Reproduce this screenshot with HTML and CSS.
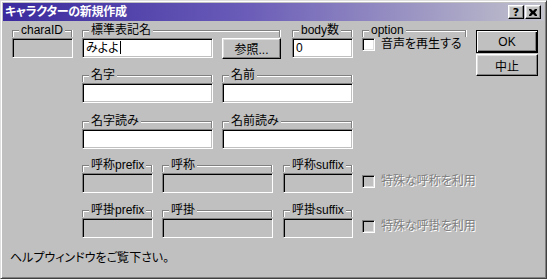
FILE: index.html
```html
<!doctype html>
<html lang="ja">
    <head>
        <meta charset="UTF-8" />
        <title>キャラクターの新規作成</title>
        <link rel="stylesheet" href="styles.css">
    </head>
    <body>
        <div class="window">
            <div class="titlebar">
                <span class="title">キャラクターの新規作成</span>
                <div class="title-buttons">
                    <span class="tbtn">?</span>
                    <span class="tbtn">
                        <svg viewBox="0 0 8 7" width="8" height="7">
                            <path d="M0 0h2l2 2 2-2h2v1l-2 2.5 2 2.5v1h-2l-2-2-2 2h-2v-1l2-2.5-2-2.5z" fill="#000"/>
                        </svg>
                    </span>
                </div>
            </div>

            <div class="client">
                <div class="form">
                    <div class="row row-1">
                        <div class="grp w-id">
                            <div class="cap"><span>charaID</span></div>
                            <div class="edit off"></div>
                        </div>
                        <div class="grp w-name">
                            <div class="cap"><span>標準表記名</span></div>
                            <div class="grp-body">
                                <div class="edit w-wide">みよよ<span class="caret"></span></div>
                                <div class="btn btn-ref">参照...</div>
                            </div>
                        </div>
                        <div class="grp w-body">
                            <div class="cap"><span>body数</span></div>
                            <div class="edit">0</div>
                        </div>
                        <div class="grp w-opt">
                            <div class="cap"><span>option</span></div>
                            <label class="check">
                                <span class="box"></span>
                                音声を再生する
                            </label>
                        </div>
                    </div>

                    <div class="row row-2">
                        <div class="grp w-wide">
                            <div class="cap"><span>名字</span></div>
                            <div class="edit"></div>
                        </div>
                        <div class="grp w-wide">
                            <div class="cap"><span>名前</span></div>
                            <div class="edit"></div>
                        </div>
                    </div>

                    <div class="row row-3">
                        <div class="grp w-wide">
                            <div class="cap"><span>名字読み</span></div>
                            <div class="edit"></div>
                        </div>
                        <div class="grp w-wide">
                            <div class="cap"><span>名前読み</span></div>
                            <div class="edit"></div>
                        </div>
                    </div>

                    <div class="row row-4">
                        <div class="grp w-prefix">
                            <div class="cap"><span>呼称prefix</span></div>
                            <div class="edit off"></div>
                        </div>
                        <div class="grp w-call">
                            <div class="cap"><span>呼称</span></div>
                            <div class="edit off"></div>
                        </div>
                        <div class="grp w-suffix">
                            <div class="cap"><span>呼称suffix</span></div>
                            <div class="edit off"></div>
                        </div>
                        <label class="check disabled">
                            <span class="box"></span>
                            特殊な呼称を利用
                        </label>
                    </div>

                    <div class="row row-5">
                        <div class="grp w-prefix">
                            <div class="cap"><span>呼掛prefix</span></div>
                            <div class="edit off"></div>
                        </div>
                        <div class="grp w-call">
                            <div class="cap"><span>呼掛</span></div>
                            <div class="edit off"></div>
                        </div>
                        <div class="grp w-suffix">
                            <div class="cap"><span>呼掛suffix</span></div>
                            <div class="edit off"></div>
                        </div>
                        <label class="check disabled">
                            <span class="box"></span>
                            特殊な呼掛を利用
                        </label>
                    </div>

                    <p class="help">ヘルプウィンドウをご覧下さい。</p>
                </div>

                <div class="actions">
                    <div class="btn btn-default">OK</div>
                    <div class="btn">中止</div>
                </div>
            </div>
        </div>
    </body>
</html>
```

FILE: styles.css
```css
* {
    box-sizing: border-box;
}

body {
    margin: 0;
    background: #c0c0c0;
    font-family: "Liberation Sans", "Noto Sans CJK JP", sans-serif;
    font-size: 12px;
    font-feature-settings: "palt";
    color: #000;
}

.window {
    width: 547px;
    height: 279px;
    padding: 2px;
    background: #c0c0c0;
    border: 1px solid;
    border-color: #dfdfdf #404040 #404040 #dfdfdf;
    box-shadow:
        inset 1px 1px #fff,
        inset -1px -1px #808080;
}

/* title bar */
.titlebar {
    height: 18px;
    display: flex;
    align-items: center;
    justify-content: space-between;
    padding: 0 3px 0 2px;
    background: linear-gradient(to right, #3a2a9e, #6a5cb8 45%, #c2c2cc);
}

.title {
    color: #fff;
    font-weight: bold;
    line-height: 18px;
    letter-spacing: -0.3px;
}

.title-buttons {
    display: flex;
    gap: 1px;
}

.tbtn {
    width: 16px;
    height: 14px;
    display: flex;
    align-items: center;
    justify-content: center;
    background: #c0c0c0;
    border: 1px solid;
    border-color: #fff #000 #000 #fff;
    box-shadow:
        inset -1px -1px #808080,
        inset 1px 1px #dfdfdf;
    font: bold 11px "DejaVu Sans", sans-serif;
}

/* client area */
.client {
    display: flex;
    padding: 2px 0 0 9px;
}

.form {
    width: 454px;
    flex-shrink: 0;
}

.row {
    display: flex;
    align-items: flex-start;
}

.row-2,
.row-3,
.row-4,
.row-5 {
    padding-left: 70px;
}

.row-2 { margin-top: 9px; }
.row-3 { margin-top: 11px; }
.row-4 { margin-top: 9px; }
.row-5 { margin-top: 10px; }

.row > * {
    flex-shrink: 0;
}

.row > * + * {
    margin-left: 9px;
}

.row-1 .w-body {
    margin-left: 11px;
}

.row-4 .w-suffix,
.row-5 .w-suffix {
    margin-left: 10px;
}

/* group box caption */
.grp {
    display: flex;
    flex-direction: column;
}

.cap {
    display: flex;
    height: 15px;
    padding-right: 1px;
}

.cap::before {
    content: "";
    width: 6px;
    height: 6px;
    margin-top: 7px;
    border-top: 1px solid #808080;
    border-left: 1px solid #808080;
    box-shadow: inset 1px 1px #fff;
}

.cap span {
    padding: 0 2px;
    line-height: 14px;
    white-space: nowrap;
}

.cap::after {
    content: "";
    flex: 1;
    height: 6px;
    margin-top: 7px;
    border-top: 1px solid #808080;
    border-right: 1px solid #808080;
    box-shadow:
        inset 0 1px #fff,
        1px 0 #fff;
}

.grp-body {
    display: flex;
    gap: 9px;
}

.w-id { width: 61px; }
.w-name { width: 199px; }
.w-body { width: 61px; }
.w-opt { width: 105px; }
.w-wide { width: 131px; }
.w-prefix { width: 71px; }
.w-call { width: 111px; }
.w-suffix { width: 70px; }

/* edit box */
.edit {
    height: 20px;
    padding: 0 3px;
    line-height: 18px;
    background: #fff;
    border: 1px solid;
    border-color: #808080 #fff #fff #808080;
    box-shadow:
        inset 1px 1px #000,
        inset -1px -1px #c0c0c0;
    white-space: nowrap;
}

.edit.off {
    background: #c0c0c0;
}

.caret {
    display: inline-block;
    width: 1px;
    height: 13px;
    margin-left: 1px;
    background: #000;
    vertical-align: -2px;
}

/* buttons */
.btn {
    width: 62px;
    height: 22px;
    display: flex;
    align-items: center;
    justify-content: center;
    background: #c0c0c0;
    border: 1px solid;
    border-color: #fff #000 #000 #fff;
    box-shadow:
        inset -1px -1px #808080,
        inset 1px 1px #dfdfdf;
}

.btn-ref {
    width: 59px;
    height: 21px;
}

.btn-default {
    height: 23px;
    border-color: #000;
    box-shadow:
        inset 1px 1px #fff,
        inset -1px -1px #000,
        inset -2px -2px #808080;
}

.actions {
    display: flex;
    flex-direction: column;
    gap: 1px;
    margin-left: 10px;
    padding-top: 7px;
}

/* check boxes */
.check {
    display: flex;
    align-items: center;
    gap: 6px;
    line-height: 13px;
    white-space: nowrap;
}

.row-4 .check,
.row-5 .check {
    margin-top: 17px;
}

.box {
    width: 13px;
    height: 13px;
    flex-shrink: 0;
    background: #fff;
    border: 1px solid;
    border-color: #808080 #fff #fff #808080;
    box-shadow:
        inset 1px 1px #000,
        inset -1px -1px #dfdfdf;
}

.check.disabled {
    color: #808080;
    text-shadow: 1px 1px 0 #fff;
}

.check.disabled .box {
    background: #c0c0c0;
}

.help {
    margin: 13px 0 0 -2px;
    line-height: 14px;
}
```
